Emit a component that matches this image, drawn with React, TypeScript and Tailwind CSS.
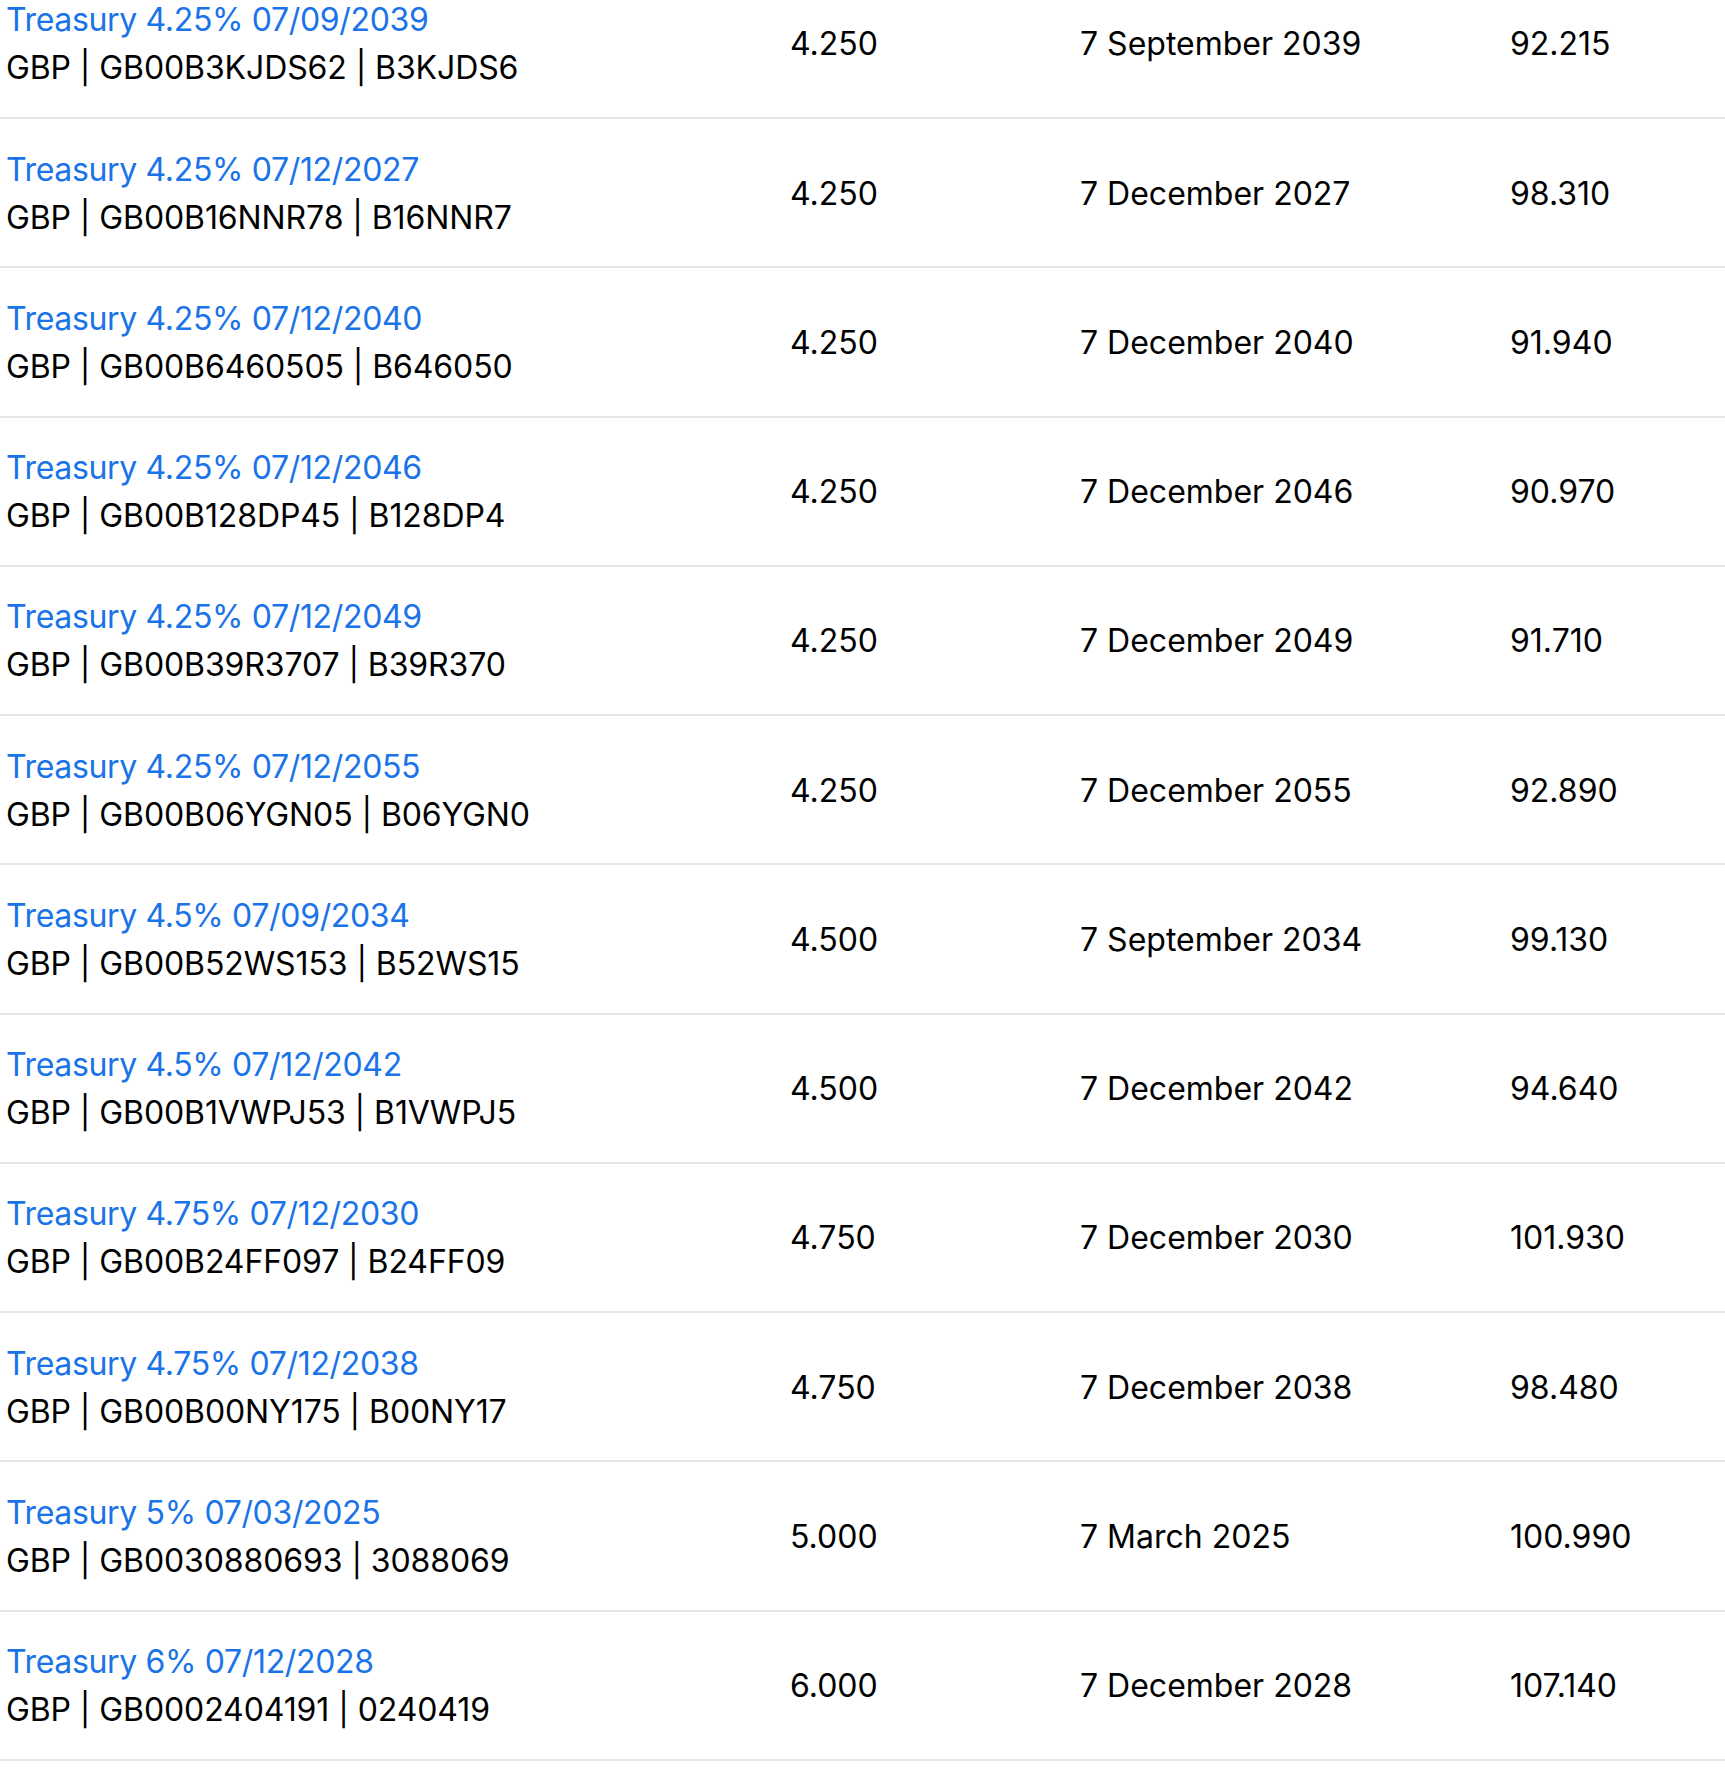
const bonds = [
  { name: "Treasury 4.25% 07/09/2039", isin: "GB00B3KJDS62", sedol: "B3KJDS6", coupon: "4.250", maturity: "7 September 2039", price: "92.215" },
  { name: "Treasury 4.25% 07/12/2027", isin: "GB00B16NNR78", sedol: "B16NNR7", coupon: "4.250", maturity: "7 December 2027", price: "98.310" },
  { name: "Treasury 4.25% 07/12/2040", isin: "GB00B6460505", sedol: "B646050", coupon: "4.250", maturity: "7 December 2040", price: "91.940" },
  { name: "Treasury 4.25% 07/12/2046", isin: "GB00B128DP45", sedol: "B128DP4", coupon: "4.250", maturity: "7 December 2046", price: "90.970" },
  { name: "Treasury 4.25% 07/12/2049", isin: "GB00B39R3707", sedol: "B39R370", coupon: "4.250", maturity: "7 December 2049", price: "91.710" },
  { name: "Treasury 4.25% 07/12/2055", isin: "GB00B06YGN05", sedol: "B06YGN0", coupon: "4.250", maturity: "7 December 2055", price: "92.890" },
  { name: "Treasury 4.5% 07/09/2034", isin: "GB00B52WS153", sedol: "B52WS15", coupon: "4.500", maturity: "7 September 2034", price: "99.130" },
  { name: "Treasury 4.5% 07/12/2042", isin: "GB00B1VWPJ53", sedol: "B1VWPJ5", coupon: "4.500", maturity: "7 December 2042", price: "94.640" },
  { name: "Treasury 4.75% 07/12/2030", isin: "GB00B24FF097", sedol: "B24FF09", coupon: "4.750", maturity: "7 December 2030", price: "101.930" },
  { name: "Treasury 4.75% 07/12/2038", isin: "GB00B00NY175", sedol: "B00NY17", coupon: "4.750", maturity: "7 December 2038", price: "98.480" },
  { name: "Treasury 5% 07/03/2025", isin: "GB0030880693", sedol: "3088069", coupon: "5.000", maturity: "7 March 2025", price: "100.990" },
  { name: "Treasury 6% 07/12/2028", isin: "GB0002404191", sedol: "0240419", coupon: "6.000", maturity: "7 December 2028", price: "107.140" },
];

export default function App() {
  return (
    <div className="min-h-screen overflow-hidden bg-white font-['Inter',sans-serif] text-[32px] leading-[48px] text-black">
      <div className="-mt-[30.3px]">
        {bonds.map((b) => (
          <div
            key={b.isin}
            className="grid h-[149.27px] grid-cols-[784px_290px_430px_1fr] items-center border-b-2 border-[#e6e6e6] pl-1.5 pt-[2px]"
          >
            <div>
              <a href="#" className="block tracking-[-0.34px] text-[#1a73e8]">
                {b.name}
              </a>
              <div className="tracking-[-0.1px]">
                GBP | {b.isin} | {b.sedol}
              </div>
            </div>
            <div>{b.coupon}</div>
            <div>{b.maturity}</div>
            <div>{b.price}</div>
          </div>
        ))}
      </div>
    </div>
  );
}
